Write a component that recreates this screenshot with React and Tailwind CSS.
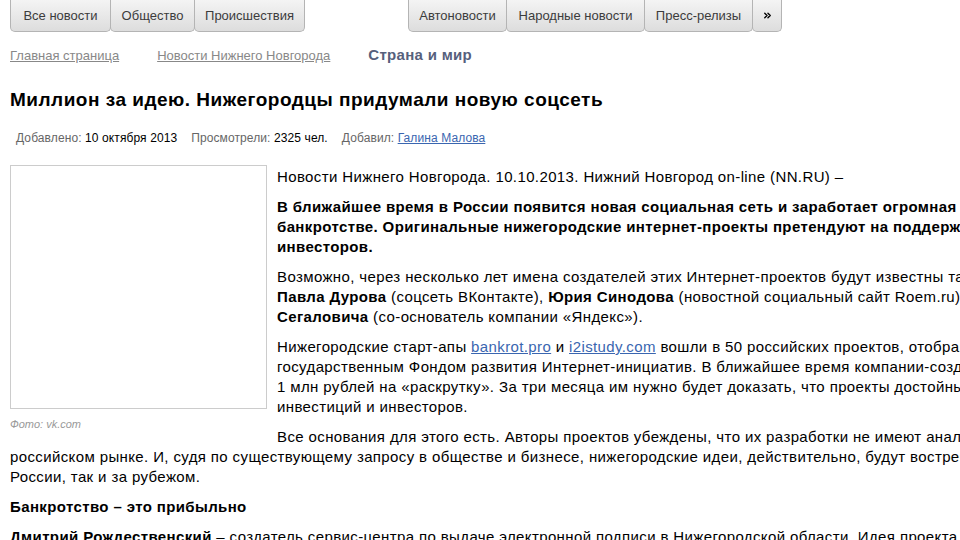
import React from 'react';
import { ChevronsRight } from 'lucide-react';

const LEFT_TABS = [
  { label: 'Все новости', w: 'w-[101px]' },
  { label: 'Общество', w: 'w-[85px]' },
  { label: 'Происшествия', w: 'w-[111px]' },
];
const RIGHT_TABS = [
  { label: 'Автоновости', w: 'w-[99px]' },
  { label: 'Народные новости', w: 'w-[139px]' },
  { label: 'Пресс-релизы', w: 'w-[109px]' },
];

function Tab({ children, first, w }) {
  return (
    <div
      className={`${w} h-[32px] flex items-center justify-center text-[13px] text-[#3c3c3c] whitespace-nowrap border-x border-b border-[#b4b4b4] rounded-b-[5px] bg-gradient-to-b from-[#f4f4f4] to-[#dddddd] ${
        first ? '' : '-ml-px'
      }`}
    >
      {children}
    </div>
  );
}

export default function App() {
  return (
    <div className="w-full h-[540px] overflow-hidden bg-white font-['Liberation_Sans',Arial,sans-serif] text-black">
      <div className="w-[1100px]">
        {/* tabs */}
        <div className="flex pl-[10px]">
          {LEFT_TABS.map((t, i) => (
            <Tab key={t.label} w={t.w} first={i === 0}>{t.label}</Tab>
          ))}
          <div className="w-[103px]" />
          {RIGHT_TABS.map((t, i) => (
            <Tab key={t.label} w={t.w} first={i === 0}>{t.label}</Tab>
          ))}
          <Tab w="w-[30px]">
            <ChevronsRight size={11} strokeWidth={3} className="text-black" />
          </Tab>
        </div>

        {/* breadcrumbs */}
        <div className="flex items-baseline pl-[10px] mt-[12px] h-[18px]">
          <a href="#" className="text-[13px] text-[#888] underline">Главная страница</a>
          <a href="#" className="ml-[38px] text-[13px] text-[#888] underline">Новости Нижнего Новгорода</a>
          <span className="ml-[38px] text-[15px] font-bold tracking-[0.3px] text-[#56607c]">Страна и мир</span>
        </div>

        <h1 className="pl-[10px] mt-[26px] text-[19px] leading-[24px] font-bold tracking-[0.5px]">
          Миллион за идею. Нижегородцы придумали новую соцсеть
        </h1>

        <div className="pl-[16px] mt-[18px] text-[12px] leading-[16px] tracking-[0.1px]">
          <span className="text-[#666]">Добавлено:</span> 10 октября 2013
          <span className="ml-[14px] text-[#666]">Просмотрели:</span> 2325 чел.
          <span className="ml-[14px] text-[#666]">Добавил:</span>{' '}
          <a href="#" className="text-[#3a66b0] underline">Галина Малова</a>
        </div>

        {/* article */}
        <div className="pl-[10px] mt-[19px] text-[15px] leading-[20px] tracking-[0.38px] whitespace-nowrap">
          <div className="float-left w-[257px] mr-[10px]">
            <div className="h-[244px] border border-[#cccccc] bg-white" />
            <div className="mt-[8px] text-[11px] leading-[14px] italic tracking-normal text-[#999]">Фото: vk.com</div>
          </div>

          <p className="pt-[2px]">Новости Нижнего Новгорода. 10.10.2013. Нижний Новгород on-line (NN.RU) –</p>

          <p className="mt-[10px] font-bold">
            В ближайшее время в России появится новая социальная сеть и заработает огромная база данных о<br />
            банкротстве. Оригинальные нижегородские интернет-проекты претендуют на поддержку государственных<br />
            инвесторов.
          </p>

          <p className="mt-[10px]">
            Возможно, через несколько лет имена создателей этих Интернет-проектов будут известны так же, как имена<br />
            <b>Павла Дурова</b> (соцсеть ВКонтакте), <b>Юрия Синодова</b> (новостной социальный сайт Roem.ru) или <b>Аркадия</b><br />
            <b>Сегаловича</b> (со-основатель компании «Яндекс»).
          </p>

          <p className="mt-[10px]">
            Нижегородские старт-апы <a href="#" className="text-[#3a66b0] underline">bankrot.pro</a> и{' '}
            <a href="#" className="text-[#3a66b0] underline">i2istudy.com</a> вошли в 50 российских проектов, отобранных<br />
            государственным Фондом развития Интернет-инициатив. В ближайшее время компании-создатели получат по<br />
            1 млн рублей на «раскрутку». За три месяца им нужно будет доказать, что проекты достойны дальнейших<br />
            инвестиций и инвесторов.
          </p>

          <p className="mt-[10px]">
            Все основания для этого есть. Авторы проектов убеждены, что их разработки не имеют аналогов на<br />
            российском рынке. И, судя по существующему запросу в обществе и бизнесе, нижегородские идеи, действительно, будут востребованы как в<br />
            России, так и за рубежом.
          </p>

          <p className="mt-[10px] font-bold">Банкротство – это прибыльно</p>

          <p className="mt-[10px]">
            <b>Дмитрий Рождественский</b> – создатель сервис-центра по выдаче электронной подписи в Нижегородской области. Идея проекта
          </p>
        </div>
      </div>
    </div>
  );
}
